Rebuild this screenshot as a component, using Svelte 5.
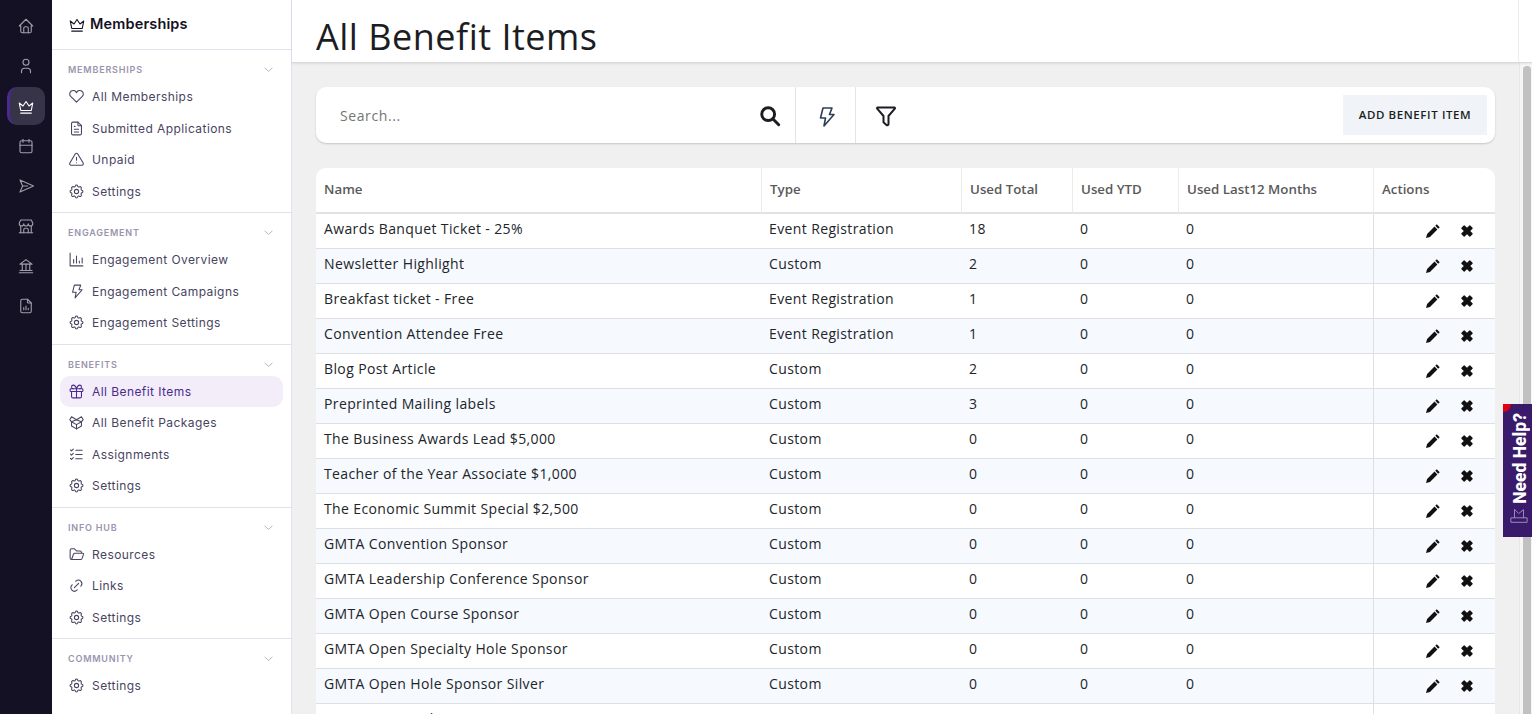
<script lang="ts">
  const ic = {
    heart: '<path d="M19.5 12.6 12 20l-7.5-7.4A5 5 0 1 1 12 6.6a5 5 0 1 1 7.5 6z"/>',
    doc: '<path d="M14 3v4a1 1 0 0 0 1 1h4"/><path d="M17 21H7a2 2 0 0 1-2-2V5a2 2 0 0 1 2-2h7l5 5v11a2 2 0 0 1-2 2z"/><path d="M9 9h1M9 13h6M9 17h6"/>',
    alert: '<path d="M12 9v4M12 16.5v.01"/><path d="M10.4 3.9 2.6 17a2 2 0 0 0 1.7 3h15.4a2 2 0 0 0 1.7-3L13.6 3.9a2 2 0 0 0-3.2 0z"/>',
    gear: '<path d="M10.3 4.3c.4-1.8 3-1.8 3.4 0a1.7 1.7 0 0 0 2.6 1.1c1.5-.9 3.3.8 2.4 2.4a1.7 1.7 0 0 0 1 2.5c1.8.4 1.8 3 0 3.4a1.7 1.7 0 0 0-1 2.6c.9 1.5-.9 3.3-2.4 2.4a1.7 1.7 0 0 0-2.6 1c-.4 1.8-3 1.8-3.4 0a1.7 1.7 0 0 0-2.6-1c-1.5.9-3.3-.9-2.4-2.4a1.7 1.7 0 0 0-1-2.6c-1.8-.4-1.8-3 0-3.4a1.7 1.7 0 0 0 1-2.5c-.9-1.6.9-3.3 2.4-2.4 1 .6 2.3.1 2.6-1.1z"/><circle cx="12" cy="12" r="3"/>',
    chart: '<path d="M3 3v18h18"/><path d="M8 17v-5M12 17V7M16 17v-3M20 17V10"/>',
    bolt: '<path d="M9 3h9l-2.500 6.500H20L10 21l1.500-8H6.500z"/>',
    gift: '<rect x="3" y="8" width="18" height="4" rx="1"/><path d="M12 8v13M19 12v7a2 2 0 0 1-2 2H7a2 2 0 0 1-2-2v-7"/><path d="M7.5 8a2.5 2.5 0 0 1 0-5C9 3 11 5 12 8c1-3 3-5 4.500-5a2.500 2.500 0 0 1 0 5"/>',
    pack: '<path d="M12 8 5 4 2.500 8 5 11v6l7 4 7-4v-6l2.500-3L19 4z"/><path d="M5 11l7-3 7 3M5 11l7 4 7-4M12 15v6"/>',
    checks: '<path d="M3.500 5.500 5 7l2.500-2.500M3.500 11.500 5 13l2.500-2.500M3.500 17.500 5 19l2.500-2.500"/><path d="M11 6h9M11 12h9M11 18h9"/>',
    folder: '<path d="m5 19 2.800-7.500a2 2 0 0 1 1.900-1.300H21a1 1 0 0 1 1 1.300l-2.200 6.300a2 2 0 0 1-1.900 1.200H5a2 2 0 0 1-2-2V6a2 2 0 0 1 2-2h4l3 3h5a2 2 0 0 1 2 2v1"/>',
    link: '<path d="M9 15l6-6"/><path d="m11 6 .5-.5a5 5 0 0 1 7 7l-.5.5"/><path d="m13 18-.4.5a5 5 0 0 1-7.100-7.100l.5-.4"/>',
    home: '<path d="M5 12H3l9-9 9 9h-2"/><path d="M5 12v7a2 2 0 0 0 2 2h10a2 2 0 0 0 2-2v-7"/><path d="M9 21v-6a2 2 0 0 1 2-2h2a2 2 0 0 1 2 2v6"/>',
    user: '<circle cx="12" cy="7" r="4"/><path d="M6 21v-2a4 4 0 0 1 4-4h4a4 4 0 0 1 4 4v2"/>',
    crown: '<path d="M12 6l4 6 5-4-2 10H5L3 8l5 4z"/><path d="M5 21.500h14"/>',
    cal: '<rect x="4" y="5" width="16" height="16" rx="2"/><path d="M16 3v4M8 3v4M4 11h16"/>',
    send: '<path d="M4 4 22 12 4 20 7.500 12z"/><path d="M7.500 12H14"/>',
    store: '<path d="M3 21h18"/><path d="M3 8v1a3 3 0 0 0 6 0 3 3 0 0 0 6 0 3 3 0 0 0 6 0V8l-2-4H5z"/><path d="M5 21V11.800M19 21V11.800"/><path d="M9 21v-4a2 2 0 0 1 2-2h2a2 2 0 0 1 2 2v4"/>',
    bank: '<path d="M3 21h18M4 18h16M4 9.500h16L12 3.500z"/><path d="M7 9.500V18M12 9.500V18M17 9.500V18"/>',
    report: '<path d="M14 3v4a1 1 0 0 0 1 1h4"/><path d="M17 21H7a2 2 0 0 1-2-2V5a2 2 0 0 1 2-2h7l5 5v11a2 2 0 0 1-2 2z"/><path d="M9 17v-3M12 17v-5M15 17v-2"/>',
  };

  const rail = [ic.home, ic.user, ic.crown, ic.cal, ic.send, ic.store, ic.bank, ic.report];

  const sections = [
    { title: "MEMBERSHIPS", items: [["All Memberships", ic.heart], ["Submitted Applications", ic.doc], ["Unpaid", ic.alert], ["Settings", ic.gear]] },
    { title: "ENGAGEMENT", items: [["Engagement Overview", ic.chart], ["Engagement Campaigns", ic.bolt], ["Engagement Settings", ic.gear]] },
    { title: "BENEFITS", items: [["All Benefit Items", ic.gift], ["All Benefit Packages", ic.pack], ["Assignments", ic.checks], ["Settings", ic.gear]] },
    { title: "INFO HUB", items: [["Resources", ic.folder], ["Links", ic.link], ["Settings", ic.gear]] },
    { title: "COMMUNITY", items: [["Settings", ic.gear]] },
  ];

  const rows = [
    ["Awards Banquet Ticket - 25%", "Event Registration", 18],
    ["Newsletter Highlight", "Custom", 2],
    ["Breakfast ticket - Free", "Event Registration", 1],
    ["Convention Attendee Free", "Event Registration", 1],
    ["Blog Post Article", "Custom", 2],
    ["Preprinted Mailing labels", "Custom", 3],
    ["The Business Awards Lead $5,000", "Custom", 0],
    ["Teacher of the Year Associate $1,000", "Custom", 0],
    ["The Economic Summit Special $2,500", "Custom", 0],
    ["GMTA Convention Sponsor", "Custom", 0],
    ["GMTA Leadership Conference Sponsor", "Custom", 0],
    ["GMTA Open Course Sponsor", "Custom", 0],
    ["GMTA Open Specialty Hole Sponsor", "Custom", 0],
    ["GMTA Open Hole Sponsor Silver", "Custom", 0],
    ["GMTA Open Hole Sponsor Bronze", "Custom", 0],
  ];
</script>

<div class="app">
  <nav class="rail">
    {#each rail as icon, i}
      <div class="rail-btn" class:on={i === 2}>
        <svg viewBox="0 0 24 24" width="18" height="18">{@html icon}</svg>
      </div>
    {/each}
  </nav>

  <aside class="side">
    <div class="side-head">
      <svg viewBox="0 0 24 24" width="18" height="18">{@html ic.crown}</svg>
      <span>Memberships</span>
    </div>
    {#each sections as s}
      <section class="sec">
        <div class="sec-title">
          <span>{s.title}</span>
          <svg viewBox="0 0 24 24" width="11" height="11"><path d="m4 9 8 7 8-7" /></svg>
        </div>
        {#each s.items as [label, icon]}
          <div class="item" class:active={label === "All Benefit Items"}>
            <svg viewBox="0 0 24 24" width="17" height="17">{@html icon}</svg>
            <span>{label}</span>
          </div>
        {/each}
      </section>
    {/each}
  </aside>

  <div class="main">
    <header class="top">
      <h1>All Benefit Items</h1>
      <div class="top-gap"></div>
    </header>
    <div class="body">
      <div class="content">
        <div class="toolbar">
          <div class="search">Search...</div>
          <div class="tool first">
            <svg viewBox="0 0 24 24" width="22" height="22" class="mag"><circle cx="10" cy="10" r="7" /><path d="m15 15 6.500 6.500" /></svg>
          </div>
          <div class="tool bordered">
            <svg viewBox="0 0 24 24" width="24" height="24" class="flash"><path d="M9 3h9l-2.500 6.500H20L10 21l1.500-8H6.500z" /></svg>
          </div>
          <div class="tool bordered last">
            <svg viewBox="0 0 24 24" width="24" height="24" class="funnel"><path d="M3.700 3.500h16.600a.7.7 0 0 1 .5 1.200L14.500 12v8a1.200 1.200 0 0 1-2 .9l-2.500-2.100a1.200 1.200 0 0 1-.5-.9V12L3.200 4.700a.7.7 0 0 1 .5-1.200z" /></svg>
          </div>
          <button class="add">ADD BENEFIT ITEM</button>
        </div>

        <table class="grid">
          <colgroup>
            <col class="c1" /><col class="c2" /><col class="c3" /><col class="c4" /><col class="c5" /><col />
          </colgroup>
          <thead>
            <tr>
              <th>Name</th><th>Type</th><th>Used Total</th><th>Used YTD</th><th>Used Last12 Months</th><th>Actions</th>
            </tr>
          </thead>
          <tbody>
            {#each rows as [name, type, total]}
              <tr>
                <td>{name}</td><td>{type}</td><td>{total}</td><td>0</td><td>0</td>
                <td class="acts">
                  <svg viewBox="0 0 16 16" width="16" height="16"><path d="M11.800 1.300 14.700 4.200 13.200 5.700 10.300 2.800zM9.500 3.600 12.400 6.500 5 13.900 1 15 2.100 11z" fill="#111" /></svg>
                  <svg viewBox="0 0 16 16" width="14" height="14"><path d="M2.200 4.800 4.800 2.200 8 5.400l3.200-3.200 2.600 2.600L10.600 8l3.200 3.200-2.600 2.600L8 10.600l-3.200 3.200-2.600-2.600L5.400 8z" fill="#111" stroke="#111" stroke-linejoin="round" /></svg>
                </td>
              </tr>
            {/each}
          </tbody>
        </table>
      </div>
      <div class="scroll"><div class="thumb"></div></div>
    </div>
  </div>

  <div class="help">
    <i class="dot"></i>
    <span>Need Help?</span>
    <svg viewBox="0 0 20 20" width="18" height="18"><path d="M5 3v9H1v5h18v-5h-4V3l-5 4zM5 12h10" fill="none" stroke="#a695c4" stroke-width="1" /></svg>
  </div>
</div>

<style>
  :global(body) {
    margin: 0;
    overflow: hidden;
  }
  .app {
    display: flex;
    height: 714px;
    overflow: hidden;
    position: relative;
    font-family: "Open Sans", sans-serif;
  }
  svg {
    fill: none;
    stroke: currentColor;
    stroke-width: 1.5;
    stroke-linecap: round;
    stroke-linejoin: round;
    flex: none;
  }

  .rail {
    width: 52px;
    flex: none;
    background: #151124;
    padding-top: 7px;
    box-sizing: border-box;
    display: flex;
    flex-direction: column;
    align-items: center;
    gap: 2px;
  }
  .rail-btn {
    width: 38px;
    height: 38px;
    display: flex;
    align-items: center;
    justify-content: center;
    color: #a09dab;
    border-radius: 10px;
    box-sizing: border-box;
  }
  .rail-btn.on {
    background: #37344a;
    color: #fff;
    border-left: 3px solid #4a2a8c;
    padding-right: 3px;
  }

  .side {
    width: 240px;
    flex: none;
    background: #fff;
    border-right: 1px solid #e2e0ea;
    font-family: Inter, sans-serif;
    box-sizing: border-box;
  }
  .side-head {
    height: 49px;
    display: flex;
    align-items: center;
    gap: 4px;
    padding: 0 0 2px 16px;
    box-sizing: border-box;
    color: #151124;
    font-size: 14.5px;
    font-weight: 600;
    letter-spacing: 0.15px;
  }
  .sec {
    border-top: 1px solid #e2e0ea;
    padding-bottom: 5px;
  }
  .sec-title {
    height: 31px;
    padding: 8px 17px 0 16px;
    box-sizing: border-box;
    display: flex;
    justify-content: space-between;
    align-items: center;
    font-size: 9px;
    font-weight: 600;
    letter-spacing: 0.8px;
    color: #9a94ae;
  }
  .item {
    height: 31.5px;
    margin: 0 8px;
    padding-left: 8px;
    display: flex;
    align-items: center;
    gap: 7px;
    font-size: 12px;
    letter-spacing: 0.43px;
    color: #48445f;
    border-radius: 10px;
  }
  .item.active {
    background: #f3edf9;
    color: #4b2a8c;
  }

  .main {
    flex: 1;
    min-width: 0;
    display: flex;
    flex-direction: column;
  }
  .top {
    height: 63px;
    flex: none;
    background: #fff;
    border-bottom: 1px solid #d9d9d9;
    box-sizing: border-box;
    box-shadow: 0 1px 2px rgba(0, 0, 0, 0.08);
    position: relative;
    display: flex;
  }
  h1 {
    flex: 1;
    margin: 0;
    padding-left: 24px;
    font-size: 36px;
    font-weight: 400;
    letter-spacing: 0.5px;
    line-height: 74px;
    color: #1b1d22;
    border-right: 1px solid #ececec;
  }
  .top-gap {
    width: 13px;
    flex: none;
  }
  .body {
    flex: 1;
    min-height: 0;
    display: flex;
    background: #f0f0f0;
  }
  .content {
    flex: 1;
    min-width: 0;
    padding: 24px 24px 0;
    overflow: hidden;
  }
  .toolbar {
    height: 56px;
    background: #fff;
    border-radius: 10px;
    box-shadow: 0 1px 2px rgba(0, 0, 0, 0.18);
    display: flex;
    align-items: center;
    padding-right: 8px;
    margin-bottom: 25px;
  }
  .search {
    flex: none;
    width: 419px;
    box-sizing: border-box;
    padding-left: 24px;
    font-size: 14px;
    letter-spacing: 0.6px;
    color: #757575;
  }
  .tool {
    width: 60px;
    height: 56px;
    padding-top: 1px;
    display: flex;
    align-items: center;
    justify-content: center;
    color: #1b1d22;
    box-sizing: border-box;
  }
  .tool.first {
    padding-left: 10px;
  }
  .tool.bordered {
    border-left: 1px solid #e4e4e4;
  }
  .tool.last {
    margin-right: auto;
  }
  .mag {
    stroke-width: 3.2;
  }
  .flash {
    color: #2f3f52;
    stroke-width: 1.6;
    margin-top: 2px;
  }
  .funnel {
    stroke-width: 2;
  }
  .add {
    width: 144px;
    height: 40px;
    border: 0;
    padding: 0 0 2px;
    background: #f0f4f8;
    font: 600 11.5px "Open Sans", sans-serif;
    letter-spacing: 0.6px;
    color: #1b1d22;
  }

  .grid {
    width: 100%;
    table-layout: fixed;
    border-collapse: separate;
    border-spacing: 0;
    background: #fff;
    border-radius: 10px 10px 0 0;
  }
  .c1 {
    width: 445px;
  }
  .c2 {
    width: 200px;
  }
  .c3 {
    width: 111px;
  }
  .c4 {
    width: 106px;
  }
  .c5 {
    width: 195px;
  }
  th {
    height: 46px;
    box-sizing: border-box;
    padding: 0 8px 2px;
    text-align: left;
    font-size: 13.3px;
    font-weight: 600;
    color: #5a5a5a;
    border-bottom: 2px solid #e2e2e2;
    border-left: 1px solid #ececec;
  }
  th:first-child {
    border-left: 0;
  }
  td {
    height: 35px;
    box-sizing: border-box;
    padding: 0 8px 6px;
    font-size: 14px;
    letter-spacing: 0.38px;
    color: #212529;
    border-bottom: 1px solid #dcdfe4;
    white-space: nowrap;
    overflow: hidden;
  }
  tbody tr:nth-child(even) td {
    background: #f6f9fe;
  }
  td.acts {
    border-left: 1px solid #dcdfe4;
    padding: 0 21px 0 0;
    text-align: right;
    line-height: 0;
  }
  .acts svg {
    stroke: none;
    display: inline-block;
    vertical-align: middle;
    margin-left: 15px;
  }

  .scroll {
    width: 13px;
    flex: none;
    border-left: 1px solid #e6e6e6;
    box-sizing: border-box;
    padding: 3px 1px 0 3px;
    background: #f6f6f6;
  }
  .thumb {
    height: 100%;
    background: #c1c1c1;
    border-radius: 4px 4px 0 0;
  }

  .help {
    position: absolute;
    left: 1503px;
    top: 404px;
    width: 29px;
    height: 133px;
    background: #3a1a6b;
    overflow: hidden;
    display: flex;
    flex-direction: column;
    align-items: center;
    color: #fff;
  }
  .help span {
    writing-mode: vertical-rl;
    transform: rotate(180deg);
    font: 800 17.5px Roboto, sans-serif;
    margin: 9px 0 0 4px;
    white-space: nowrap;
  }
  .help svg {
    margin: 3px 0 0 2px;
    stroke: none;
  }
  .dot {
    position: absolute;
    left: -8px;
    top: -8px;
    width: 16px;
    height: 16px;
    border-radius: 50%;
    background: #e1000f;
  }
</style>
